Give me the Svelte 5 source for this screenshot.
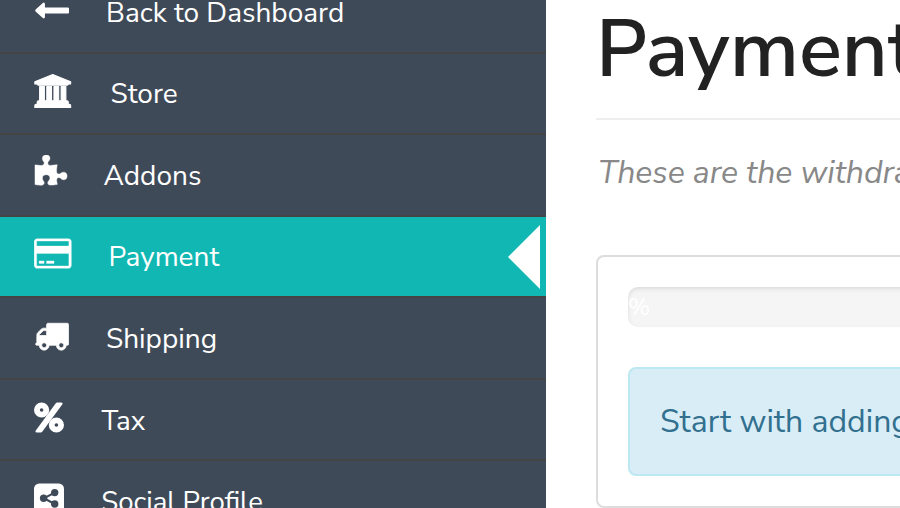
<script>
  const items = [
    { id: 'back', label: 'Back to Dashboard' },
    { id: 'store', label: 'Store' },
    { id: 'addons', label: 'Addons' },
    { id: 'payment', label: 'Payment', active: true },
    { id: 'shipping', label: 'Shipping' },
    { id: 'tax', label: 'Tax' },
    { id: 'social', label: 'Social Profile' }
  ];
  const icons = {
    back: { w: 1792, s: 70, d: 'M1792 800v192q0 14-9 23t-23 9h-1248v224q0 21-19 29t-35-5l-384-350q-10-10-10-23 0-14 10-24l384-354q16-14 35-6 19 9 19 29v224h1248q14 0 23 9t9 23z' },
    store: { w: 1920, s: 56, d: 'M960 0l960 384v128h-128q0 26-20.5 45t-48.5 19h-1526q-28 0-48.5-19t-20.5-45h-128v-128zm-704 640h256v768h128v-768h256v768h128v-768h256v768h128v-768h256v768h59q28 0 48.5 19t20.5 45v64h-1664v-64q0-26 20.5-45t48.5-19h59v-768zm1595 960q28 0 48.5 19t20.5 45v128h-1920v-128q0-26 20.5-45t48.5-19h1782z' },
    addons: { w: 1792, s: 24, d: 'M1755 1083q0 81-44.5 135t-123.5 54q-41 0-77.5-17.5t-59-38-56.5-38-71-17.5q-110 0-110 124 0 39 16 115t15 115v5q-22 0-33 1-34 3-97.5 11.5t-115.5 13.5-98 5q-61 0-103-26.5t-42-83.5q0-37 17.5-71t38-56.5 38-59 17.5-77.5q0-79-54-123.5t-135-44.5q-84 0-143 45.5t-59 127.5q0 43 15 83t33.5 64.5 33.5 53 15 50.5q0 45-46 89-37 35-117 35-95 0-245-24-9-2-27.5-4t-27.5-4l-13-2q-1 0-3-1-2 0-2-1v-1024q2 1 17.5 3.5t34 5 21.5 3.5q150 24 245 24 80 0 117-35 46-44 46-89 0-22-15-50.5t-33.5-53-33.5-64.5-15-83q0-82 59-127.5t144-45.5q80 0 134 44.5t54 123.5q0 41-17.5 77.5t-38 59-38 56.5-17.5 71q0 57 42 83.5t103 26.5q64 0 180-15t163-17v2q-1 2-3.5 17.5t-5 34-3.5 21.5q-24 150-24 245 0 80 35 117 44 46 89 46 22 0 50.5-15t53-33.5 64.5-33.5 83-15q82 0 127.5 59t45.5 143z' },
    payment: { w: 1920, s: 16, d: 'M1760 128q66 0 113 47t47 113v1216q0 66-47 113t-113 47h-1600q-66 0-113-47t-47-113v-1216q0-66 47-113t113-47h1600zm-1600 128q-13 0-22.5 9.5t-9.5 22.5v224h1664v-224q0-13-9.5-22.5t-22.5-9.5h-1600zm1600 1280q13 0 22.5-9.5t9.5-22.5v-608h-1664v608q0 13 9.5 22.5t22.5 9.5h1600zm-1504-128v-128h256v128h-256zm384 0v-128h384v128h-384z' },
    shipping: { w: 1792, s: 40, d: 'M640 1408q0-52-38-90t-90-38-90 38-38 90 38 90 90 38 90-38 38-90zm-384-512h384v-256h-158q-13 0-22 9l-195 195q-9 9-9 22v30zm1280 512q0-52-38-90t-90-38-90 38-38 90 38 90 90 38 90-38 38-90zm256-1088v1024q0 15-4 26.5t-13.5 18.5-16.5 11.5-23.5 6-22.5 2-25.5 0-22.5-.5q0 106-75 181t-181 75-181-75-75-181h-384q0 106-75 181t-181 75-181-75-75-181h-64q-3 0-22.5.5t-25.5 0-22.5-2-23.5-6-16.5-11.5-13.5-18.5-4-26.5q0-26 19-45t45-19v-320q0-8-.5-35t0-38 2.5-34.5 6.5-37 14-30.5 22.5-30l198-198q19-19 50.5-32t58.5-13h160v-192q0-26 19-45t45-19h1024q26 0 45 19t19 45z' }
  };
  const box = ({ w, s }) => `${-s / 2} ${-s / 2} ${w + s} ${1792 + s}`;
</script>

<div class="page">
  <nav class="sidebar">
    {#each items as item}
      <a class="item {item.id}" class:active={item.active} href="#{item.id}">
        <span class="icon">
          {#if item.id === 'tax'}
            <svg width="30" height="35" viewBox="0 0 30 35">
              <g fill="none" stroke="#fff" stroke-width="5.8">
                <circle cx="7.6" cy="10" r="4.7" />
                <circle cx="22.4" cy="25" r="4.7" />
              </g>
              <path d="M21.8 3.2Q22.4 2.5 23.2 2.5H27.2Q29.2 2.7 28.2 4.5L8.2 31.8Q7.6 32.5 6.8 32.5H2.8Q.8 32.3 1.8 30.5Z" fill="#fff" />
            </svg>
          {:else if item.id === 'social'}
            <svg width="30" height="35" viewBox="0 0 30 35">
              <rect y="2.5" width="30" height="30" rx="5.2" fill="#fff" />
              <g fill="#3f4a58">
                <circle cx="9.6" cy="17.2" r="3.7" />
                <circle cx="20.7" cy="11.6" r="3.7" />
                <circle cx="20.7" cy="23" r="3.7" />
              </g>
              <path d="M20.8 11.6L9.8 17.2L20.8 23" fill="none" stroke="#3f4a58" stroke-width="2.1" />
            </svg>
          {:else}
            <svg width={icons[item.id].w / 51.2} height="35" viewBox={box(icons[item.id])}>
              <path d={icons[item.id].d} fill="#fff" stroke="#fff" stroke-width={icons[item.id].s} stroke-linejoin="round" />
            </svg>
          {/if}
        </span>
        <span class="label">{item.label}</span>
      </a>
    {/each}
  </nav>

  <main class="content">
    <h1>Payment</h1>
    <p class="help">These are the withdrawal methods</p>
    <section class="card">
      <div class="progress"><span>%</span></div>
      <div class="alert">Start with adding a payment</div>
    </section>
  </main>
</div>

<style>
  :global(body) { margin: 0; background: #fff; overflow: hidden; }
  .page {
    display: flex;
    width: 900px;
    height: 508px;
    overflow: hidden;
    font-family: 'Nunito Sans', Nunito, Lato, sans-serif;
  }
  .sidebar {
    flex: none;
    width: 546px;
    height: 600px;
    margin-top: -28px;
    background: #3f4a58;
  }
  .item {
    position: relative;
    display: flex;
    box-sizing: border-box;
    height: 81.5px;
    padding-left: 34px;
    border-bottom: 2px solid #444;
    color: #fff;
    text-decoration: none;
    font-size: 28px;
    line-height: 34px;
  }
  .icon { flex: none; width: 68px; padding-top: 20px; }
  .icon svg { display: block; }
  .label { padding-top: 23.5px; white-space: nowrap; }
  .back .icon svg { margin-top: .5px; }
  .store .icon svg { height: 34.5px; }
  .addons .icon svg { margin: .3px 0 0 -1.4px; }
  .payment .icon svg { margin-top: -.3px; }
  .back .label { margin-left: 4px; }
  .store .label { margin-left: 8.5px; }
  .addons .label { margin-left: 1.5px; }
  .payment .label { margin-left: 6.5px; }
  .shipping .label { margin-left: 4px; }
  .tax .label { margin-left: -.5px; padding-top: 24.5px; font-size: 27.8px; }
  .social .label { margin-left: -.8px; font-size: 27.6px; }
  .active { background: #11b8b3; }
  .active::after {
    content: '';
    position: absolute;
    right: 6px;
    top: 8px;
    border: 32px solid transparent;
    border-left: 0;
    border-right-color: #fff;
  }
  .content { flex: none; width: 600px; padding-left: 50px; }
  h1 {
    box-sizing: border-box;
    height: 120px;
    margin: 0;
    border-bottom: 2px solid #eee;
    color: #222;
    font-size: 80px;
    font-weight: 600;
    line-height: 100px;
  }
  .help {
    height: 135px;
    box-sizing: border-box;
    margin: 0;
    padding: 32.5px 0 0 2px;
    color: #888;
    font-size: 32px;
    font-style: italic;
    line-height: 40px;
    letter-spacing: -.05px;
    white-space: nowrap;
  }
  .card {
    box-sizing: border-box;
    height: 253px;
    padding: 30px;
    border: 2px solid #ddd;
    border-radius: 8px;
  }
  .progress {
    height: 40px;
    margin-bottom: 40px;
    border-radius: 10px;
    background: #f5f5f5;
    box-shadow: inset 0 2px 4px rgba(0, 0, 0, .1);
    color: #fff;
    font-size: 24px;
    line-height: 40px;
  }
  .alert {
    box-sizing: border-box;
    height: 109px;
    padding: 30px;
    border: 2px solid #bce8f1;
    border-radius: 8px;
    background: #d9edf7;
    color: #31708f;
    font-size: 32px;
    line-height: 46px;
    white-space: nowrap;
  }
</style>
